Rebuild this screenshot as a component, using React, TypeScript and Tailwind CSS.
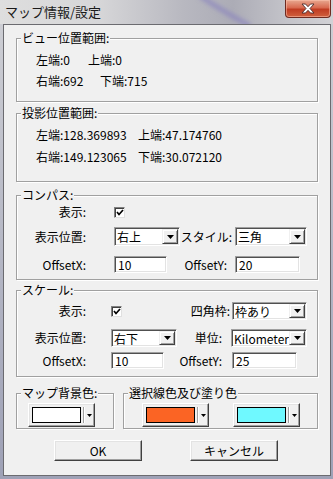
import React from "react";

const font = "font-['Noto_Sans_CJK_JP','Liberation_Sans',sans-serif]";

function GroupBox({
  label,
  className,
  children,
}: {
  label: string;
  className: string;
  children?: React.ReactNode;
}) {
  return (
    <div
      className={`relative border border-[#a0a0a0] shadow-[inset_1px_1px_0_#ffffff,1px_1px_0_#ffffff] ${className}`}
    >
      <span className="absolute left-[4px] top-[-9px] bg-[#f0f0f0] px-[1px] text-[12px] leading-[16px] text-black">
        {label}
      </span>
      {children}
    </div>
  );
}

function Arrow({ small }: { small?: boolean }) {
  return small ? (
    <svg width="5" height="3" viewBox="0 0 5 3">
      <path d="M0 0 H5 L2.5 3 Z" fill="#000" />
    </svg>
  ) : (
    <svg width="7" height="4" viewBox="0 0 7 4">
      <path d="M0 0 H7 L3.5 4 Z" fill="#000" />
    </svg>
  );
}

function Select({ value, w, h }: { value: string; w: string; h: string }) {
  return (
    <div
      className={`flex ${w} ${h} items-stretch border border-t-[#a0a0a0] border-l-[#a0a0a0] border-b-white border-r-white bg-white shadow-[inset_1px_1px_0_#505050,inset_-1px_-1px_0_#e3e3e3]`}
    >
      <span className="flex flex-1 items-center overflow-hidden whitespace-nowrap pl-[2px] pt-[1px] text-[12px] leading-none">
        {value}
      </span>
      <span className="my-[1px] mr-[1px] flex w-[16px] items-center justify-center border border-t-[#f0f0f0] border-l-[#f0f0f0] border-b-[#404040] border-r-[#404040] bg-[#f0f0f0] shadow-[inset_1px_1px_0_#ffffff,inset_-1px_-1px_0_#a0a0a0]">
        <Arrow />
      </span>
    </div>
  );
}

function Input({ value, w }: { value: string; w: string }) {
  return (
    <div
      className={`flex ${w} h-[17px] items-center border border-t-[#a0a0a0] border-l-[#a0a0a0] border-b-white border-r-white bg-white pl-[3px] text-[12px] leading-none shadow-[inset_1px_1px_0_#505050,inset_-1px_-1px_0_#e3e3e3]`}
    >
      {value}
    </div>
  );
}

function Check() {
  return (
    <span className="flex h-[11px] w-[11px] items-center justify-center border border-t-[#808080] border-l-[#808080] border-b-[#e0e0e0] border-r-[#e0e0e0] bg-white shadow-[inset_1px_1px_0_#404040]">
      <svg width="8" height="7" viewBox="0 0 8 7">
        <path d="M1 3 L3 5.5 L7 1" fill="none" stroke="#000" strokeWidth="1.7" />
      </svg>
    </span>
  );
}

function ColorButton({ color, className }: { color: string; className?: string }) {
  return (
    <div
      className={`flex h-[24px] w-[67px] items-center border border-t-white border-l-white border-b-[#404040] border-r-[#404040] bg-[#f0f0f0] shadow-[inset_-1px_-1px_0_#a0a0a0,inset_1px_1px_0_#e3e3e3] ${className ?? ""}`}
    >
      <span
        className="ml-[3px] h-[16px] w-[49px] border border-black"
        style={{ backgroundColor: color }}
      />
      <span className="ml-[2px] h-[16px] w-[2px] border-l border-l-[#a0a0a0] border-r border-r-white" />
      <span className="ml-[2px] flex">
        <Arrow small />
      </span>
    </div>
  );
}

function PushButton({ label, className }: { label: string; className?: string }) {
  return (
    <div
      className={`flex h-[21px] w-[88px] items-center justify-center border border-t-white border-l-white border-b-[#404040] border-r-[#404040] bg-[#f0f0f0] text-[12px] leading-none shadow-[inset_-1px_-1px_0_#a0a0a0,inset_1px_1px_0_#e3e3e3] ${className ?? ""}`}
    >
      {label}
    </div>
  );
}

function Label({ text, w }: { text: string; w: string }) {
  return <span className={`${w} shrink-0 text-right text-[12px] leading-[14px]`}>{text}</span>;
}

export default function App() {
  return (
    <div
      className={`flex h-[479px] w-[333px] flex-col overflow-hidden bg-gradient-to-b from-[#cfd0d5] to-[#9ea1b6] text-black ${font}`}
    >
      {/* title bar */}
      <div className="relative flex h-[24px] shrink-0 items-start justify-between overflow-hidden bg-[linear-gradient(90deg,#dedede_0%,#d6d6d8_30%,#b8b8c0_55%,#acacb6_70%,#c2c2c8_85%,#d2d2d6_100%)]">
        <svg className="absolute left-0 top-0" width="333" height="24" viewBox="0 0 333 24">
          <defs>
            <filter id="b" x="-20%" y="-20%" width="140%" height="140%">
              <feGaussianBlur stdDeviation="2" />
            </filter>
          </defs>
          <path
            d="M200 -4 C215 6 228 14 250 26"
            stroke="#8078c0"
            strokeOpacity="0.55"
            strokeWidth="5"
            fill="none"
            filter="url(#b)"
          />
        </svg>
        <span className="relative pl-[5px] pt-[3px] text-[13px] leading-[18px] text-[#1a1a1a]">
          マップ情報/設定
        </span>
        <div className="relative mr-[2px] flex h-[18px] w-[46px] items-center justify-center rounded-b-[4px] border border-t-0 border-[#6e2a20] bg-[linear-gradient(180deg,#e8a890_0%,#d86a50_45%,#c03c22_55%,#d0603e_100%)] shadow-[inset_0_0_0_1px_rgba(255,200,180,0.5)]">
          <svg width="14" height="11" viewBox="0 0 14 11">
            <path
              d="M1 1 L5 5.5 L1 10 H4.5 L7 7.3 L9.5 10 H13 L9 5.5 L13 1 H9.5 L7 3.7 L4.5 1 Z"
              fill="#fff"
              stroke="#4a2a2a"
              strokeWidth="0.9"
              strokeLinejoin="round"
            />
          </svg>
        </div>
      </div>

      {/* client */}
      <div className="ml-[3px] flex h-[452px] w-[328px] shrink-0 flex-col border border-[#6b6b70] bg-[#f0f0f0]">
        <GroupBox label="ビュー位置範囲:" className="ml-[12px] mt-[13px] h-[64px] w-[302px] pl-[19px] pt-[14px]">
          <div className="flex text-[12px] leading-[14px]">
            <span className="w-[52px]">左端:0</span>
            <span>上端:0</span>
          </div>
          <div className="mt-[7px] flex text-[12px] leading-[14px]">
            <span className="w-[64px]">右端:692</span>
            <span>下端:715</span>
          </div>
        </GroupBox>

        <GroupBox label="投影位置範囲:" className="ml-[12px] mt-[11px] h-[69px] w-[302px] pl-[19px] pt-[14px]">
          <div className="flex text-[12px] leading-[14px]">
            <span className="w-[102px]">左端:128.369893</span>
            <span>上端:47.174760</span>
          </div>
          <div className="mt-[8px] flex text-[12px] leading-[14px]">
            <span className="w-[102px]">右端:149.123065</span>
            <span>下端:30.072120</span>
          </div>
        </GroupBox>

        <GroupBox label="コンパス:" className="ml-[12px] mt-[13px] h-[85px] w-[302px] pt-[8px]">
          <div className="flex h-[16px] items-center">
            <Label text="表示:" w="w-[69px]" />
            <span className="ml-[28px]">
              <Check />
            </span>
          </div>
          <div className="mt-[7px] flex items-center">
            <Label text="表示位置:" w="w-[69px]" />
            <span className="ml-[28px]">
              <Select value="右上" w="w-[66px]" h="h-[19px]" />
            </span>
            <Label text="スタイル:" w="w-[52px]" />
            <span className="ml-[3px]">
              <Select value="三角" w="w-[72px]" h="h-[19px]" />
            </span>
          </div>
          <div className="mt-[10px] flex items-center">
            <Label text="OffsetX:" w="w-[69px]" />
            <span className="ml-[28px]">
              <Input value="10" w="w-[53px]" />
            </span>
            <Label text="OffsetY:" w="w-[60px]" />
            <span className="ml-[8px]">
              <Input value="20" w="w-[65px]" />
            </span>
          </div>
        </GroupBox>

        <GroupBox label="スケール:" className="ml-[12px] mt-[10px] h-[87px] w-[302px] pt-[11px]">
          <div className="flex items-center">
            <Label text="表示:" w="w-[69px]" />
            <span className="ml-[25px]">
              <Check />
            </span>
            <Label text="四角枠:" w="w-[108px]" />
            <span className="ml-[2px]">
              <Select value="枠あり" w="w-[75px]" h="h-[18px]" />
            </span>
          </div>
          <div className="mt-[9px] flex items-center">
            <Label text="表示位置:" w="w-[69px]" />
            <span className="ml-[25px]">
              <Select value="右下" w="w-[66px]" h="h-[18px]" />
            </span>
            <Label text="単位:" w="w-[45px]" />
            <span className="ml-[9px]">
              <Select value="Kilometer" w="w-[76px]" h="h-[18px]" />
            </span>
          </div>
          <div className="mt-[5px] flex items-center">
            <Label text="OffsetX:" w="w-[69px]" />
            <span className="ml-[25px]">
              <Input value="10" w="w-[53px]" />
            </span>
            <Label text="OffsetY:" w="w-[58px]" />
            <span className="ml-[10px]">
              <Input value="25" w="w-[65px]" />
            </span>
          </div>
        </GroupBox>

        <div className="ml-[12px] mt-[16px] flex">
          <GroupBox label="マップ背景色:" className="h-[36px] w-[98px] pl-[11px] pt-[9px]">
            <ColorButton color="#ffffff" />
          </GroupBox>
          <GroupBox label="選択線色及び塗り色" className="ml-[9px] flex h-[36px] w-[195px] pl-[18px] pt-[9px]">
            <ColorButton color="#fb6424" />
            <ColorButton color="#6ff9ff" className="ml-[24px]" />
          </GroupBox>
        </div>

        <div className="mt-[11px] flex">
          <PushButton label="OK" className="ml-[50px]" />
          <PushButton label="キャンセル" className="ml-[48px]" />
        </div>
      </div>
    </div>
  );
}
